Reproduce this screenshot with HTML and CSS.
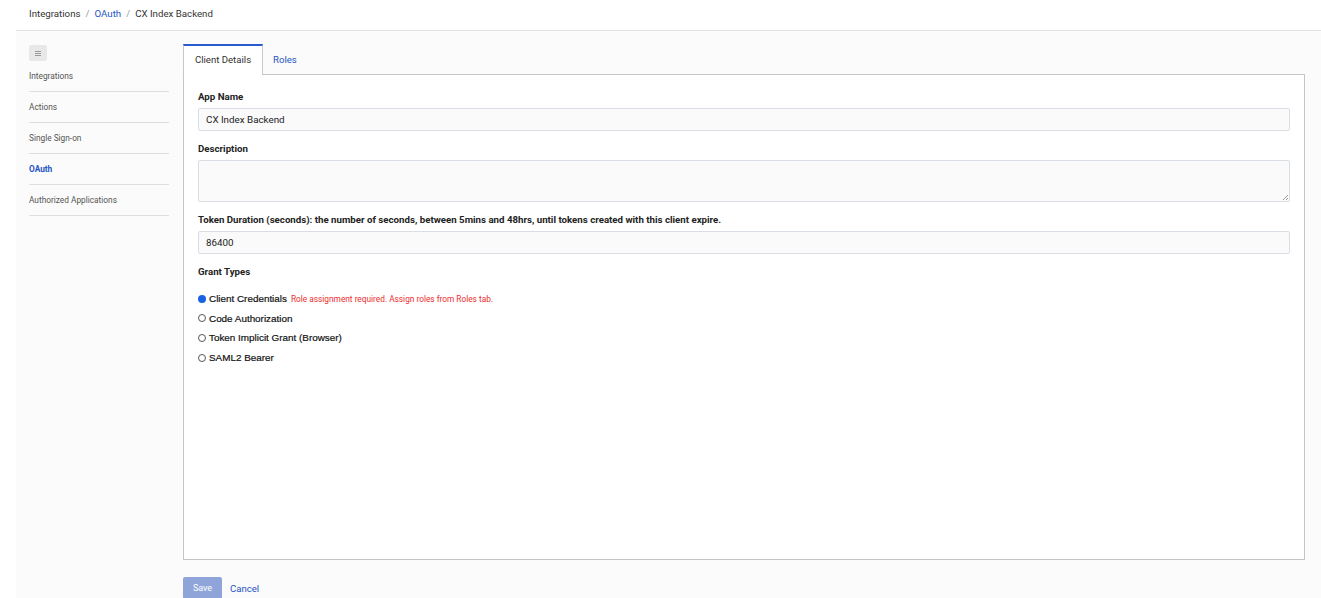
FILE: index.html
```html
<!DOCTYPE html>
<html lang="en">
<head>
<meta charset="utf-8">
<title>CX Index Backend</title>
<link rel="stylesheet" href="styles.css">
</head>
<body>
<div class="app">
  <header class="crumbs">
    <span class="crumb">Integrations</span><span class="sep">/</span><a class="crumb link">OAuth</a><span class="sep">/</span><span class="crumb">CX Index Backend</span>
  </header>
  <div class="main">
    <aside class="sidebar">
      <button class="menu-btn" type="button"><span class="bars"></span></button>
      <nav class="nav">
        <div class="nav-item">Integrations</div>
        <div class="nav-item">Actions</div>
        <div class="nav-item">Single Sign-on</div>
        <div class="nav-item active">OAuth</div>
        <div class="nav-item">Authorized Applications</div>
      </nav>
    </aside>
    <section class="content">
      <div class="tabs">
        <div class="tab current">Client Details</div>
        <div class="tab">Roles</div>
      </div>
      <div class="panel">
        <label class="label">App Name</label>
        <div class="input">CX Index Backend</div>
        <label class="label gap">Description</label>
        <div class="textarea"><span class="grip"></span></div>
        <label class="label gap">Token Duration (seconds): the number of seconds, between 5mins and 48hrs, until tokens created with this client expire.</label>
        <div class="input">86400</div>
        <label class="label gap">Grant Types</label>
        <div class="radios">
          <div class="radio-row"><span class="radio checked"></span><span class="rlabel">Client Credentials</span><span class="warn">Role assignment required. Assign roles from Roles tab.</span></div>
          <div class="radio-row"><span class="radio"></span><span class="rlabel">Code Authorization</span></div>
          <div class="radio-row"><span class="radio"></span><span class="rlabel">Token Implicit Grant (Browser)</span></div>
          <div class="radio-row"><span class="radio"></span><span class="rlabel">SAML2 Bearer</span></div>
        </div>
      </div>
      <div class="actions">
        <button class="save" type="button">Save</button>
        <a class="cancel">Cancel</a>
      </div>
    </section>
  </div>
</div>
</body>
</html>
```

FILE: styles.css
```css
* { box-sizing: border-box; }
html, body { margin: 0; padding: 0; background: #ffffff; }
body {
  font-family: Roboto, "Liberation Sans", Arial, sans-serif;
  color: #333;
  height: 598px;
  overflow: hidden;
}
.app { margin-left: 16px; height: 100%; display: flex; flex-direction: column; }
.crumbs {
  flex: none;
  height: 31px;
  border-bottom: 1px solid #e3e3e3;
  padding-left: 13px;
  font-size: 9.7px;
  line-height: 27px;
  color: #333;
}
.sep { color: #999; margin: 0 5px; }
.link { color: #2454c5; }
.main {
  flex: 1 0 auto;
  display: flex;
  gap: 14px;
  background: #fbfbfb;
  padding: 13px 16px 0 13px;
}
.sidebar { width: 140px; flex: none; }
.menu-btn {
  margin-top: 1px;
  width: 18px;
  height: 16px;
  border: 0;
  padding: 0;
  border-radius: 2px;
  background: #e8e8e8;
  display: flex;
  align-items: center;
  justify-content: center;
}
.bars {
  width: 6px;
  height: 5px;
  border-top: 1px solid #9a9a9a;
  border-bottom: 1px solid #9a9a9a;
  position: relative;
}
.bars::after {
  content: "";
  position: absolute;
  left: 0; right: 0; top: 1px;
  border-top: 1px solid #9a9a9a;
}
.nav-item {
  height: 31px;
  line-height: 30px;
  border-bottom: 1px solid #dedede;
  font-size: 8.3px;
  color: #555;
}
.nav-item.active { color: #2454c5; font-weight: 700; }
.content { flex: 1; display: flex; flex-direction: column; }
.tabs { display: flex; height: 30px; flex: none; }
.tab {
  font-size: 9.6px;
  line-height: 27px;
  padding: 2px 10px 0;
  color: #2454c5;
}
.tab.current {
  width: 80px;
  padding: 0;
  text-align: center;
  color: #333;
  background: #fff;
  border-top: 2px solid #2a5bd0;
  border-left: 1px solid #c8c8c8;
  border-right: 1px solid #c8c8c8;
  margin-bottom: -1px;
  height: 31px;
  position: relative;
  z-index: 1;
}
.panel {
  flex: none;
  height: 486px;
  background: #fff;
  border: 1px solid #c4c4c4;
  padding: 15px 14px 0 14px;
  display: flex;
  flex-direction: column;
}
.label {
  font-size: 9.7px;
  font-weight: 700;
  color: #222;
  line-height: 14px;
  margin-bottom: 4px;
}
.label.gap { margin-top: 11px; }
.input {
  height: 23px;
  background: #fafafa;
  border: 1px solid #d9dee6;
  border-radius: 2px;
  font-size: 9.8px;
  line-height: 21px;
  padding-left: 7px;
  color: #222;
}
.textarea {
  height: 42px;
  background: #fafafa;
  border: 1px solid #d9dee6;
  border-radius: 2px;
  position: relative;
}
.grip {
  position: absolute;
  right: 1px;
  bottom: 1px;
  width: 5px;
  height: 5px;
  background: linear-gradient(135deg, transparent 45%, #999 45%, #999 55%, transparent 55%, transparent 75%, #999 75%, #999 85%, transparent 85%);
}
.radios { margin-top: 6px; }
.radio-row {
  height: 19.6px;
  display: flex;
  align-items: center;
  font-family: "Liberation Sans", Arial, sans-serif;
}
.radio {
  width: 8px;
  height: 8px;
  border-radius: 50%;
  border: 1px solid #555;
  background: #fff;
  margin-right: 3px;
  flex: none;
}
.radio.checked { border: 0; background: #1a62e3; }
.rlabel { font-size: 9.9px; color: #111; -webkit-text-stroke: 0.2px #111; }
.warn {
  font-family: Roboto, "Liberation Sans", Arial, sans-serif;
  font-size: 8.3px;
  color: #ee2c2c;
  margin-left: 4px;
}
.actions {
  flex: none;
  margin-top: 17px;
  display: flex;
  align-items: center;
  gap: 8px;
}
.save {
  width: 39px;
  height: 22px;
  border: 0;
  border-radius: 2px;
  background: #8fa5d9;
  color: #fff;
  font-family: Roboto, "Liberation Sans", Arial, sans-serif;
  font-size: 9px;
  padding: 0;
}
.cancel { color: #2454c5; font-size: 9.6px; }
```
